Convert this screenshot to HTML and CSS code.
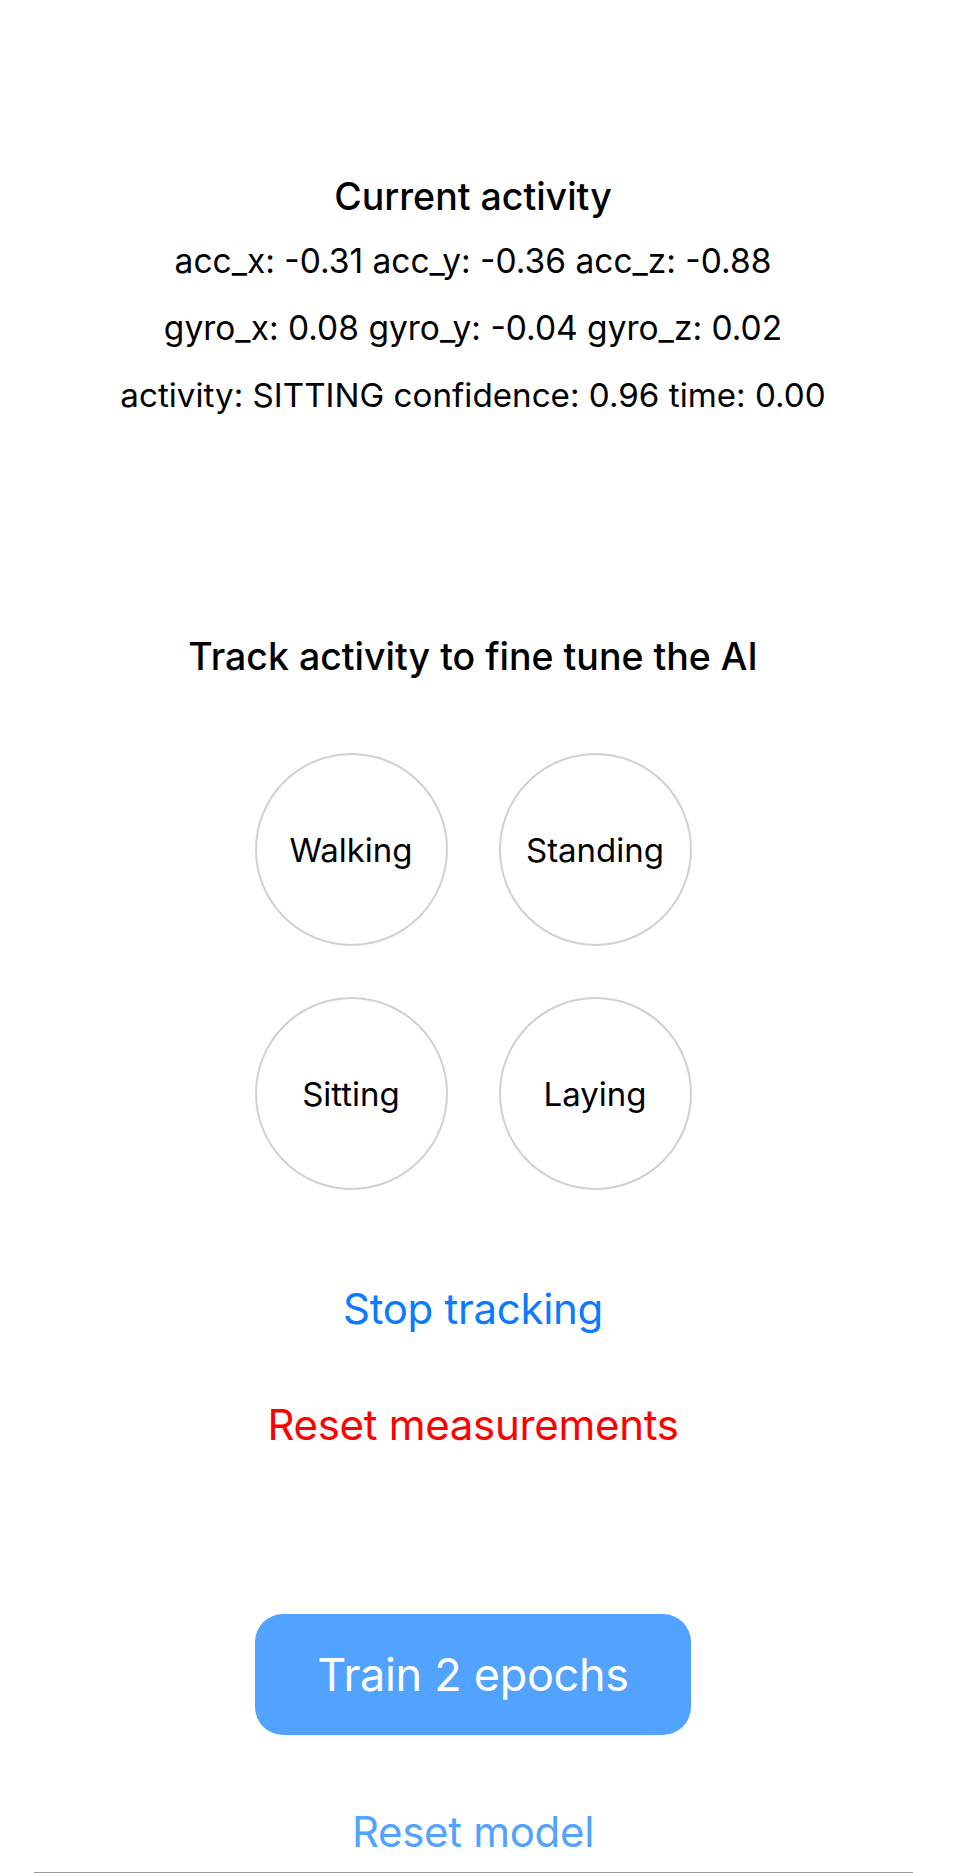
FILE: index.html
```html
<!DOCTYPE html>
<html lang="en">
<head>
<meta charset="utf-8">
<title>Activity tracker</title>
<link rel="stylesheet" href="styles.css">
</head>
<body>
<main class="screen">
  <section class="current">
    <h2 class="title">Current activity</h2>
    <p class="data">acc_x: -0.31 acc_y: -0.36 acc_z: -0.88</p>
    <p class="data">gyro_x: 0.08 gyro_y: -0.04 gyro_z: 0.02</p>
    <p class="data">activity: SITTING confidence: 0.96 time: 0.00</p>
  </section>
  <section class="track">
    <h2 class="title">Track activity to fine tune the AI</h2>
    <div class="grid">
      <button class="circle">Walking</button>
      <button class="circle">Standing</button>
      <button class="circle">Sitting</button>
      <button class="circle">Laying</button>
    </div>
    <button class="link link-blue stop">Stop tracking</button>
    <button class="link link-red reset">Reset measurements</button>
  </section>
  <section class="train">
    <button class="primary">Train 2 epochs</button>
    <button class="link link-light model">Reset model</button>
    <div class="rule"></div>
  </section>
</main>
</body>
</html>
```

FILE: styles.css
```css
* { box-sizing: border-box; }
html, body { margin: 0; padding: 0; background: #ffffff; }
body {
  font-family: Inter, "Noto Sans", "Liberation Sans", sans-serif;
  color: #000000;
  height: 1873px;
  overflow: hidden;
}
.screen {
  width: 946px;
  display: flex;
  flex-direction: column;
  align-items: center;
  padding-top: 177px;
}
.current, .track, .train {
  display: flex;
  flex-direction: column;
  align-items: center;
  width: 100%;
}
.title {
  margin: 0;
  font-size: 37.5px;
  font-weight: 500;
  line-height: 40px;
  white-space: nowrap;
}
.data {
  margin: 0;
  font-size: 33.5px;
  font-weight: 400;
  line-height: 67px;
  white-space: nowrap;
}
.data:last-child { font-size: 33.2px; }
.current .title { margin-bottom: 11px; }
.track { margin-top: 208px; }
.grid {
  margin-top: 76px;
  display: grid;
  grid-template-columns: 193px 193px;
  grid-auto-rows: 193px;
  gap: 51px;
}
.circle {
  width: 193px;
  height: 193px;
  border-radius: 50%;
  border: 2px solid #d1d1d1;
  background: #ffffff;
  font-family: inherit;
  font-size: 33px;
  font-weight: 400;
  color: #000000;
  padding: 0;
  display: flex;
  align-items: center;
  justify-content: center;
}
.link {
  background: none;
  border: none;
  padding: 0;
  font-family: inherit;
  font-size: 42px;
  font-weight: 400;
  line-height: 60px;
  letter-spacing: -0.3px;
  white-space: nowrap;
}
.link-blue { color: #0a7aff; }
.link-red { color: #ff0000; }
.link-light { color: #51a3ff; }
.stop { margin-top: 89px; }
.reset { margin-top: 56px; }
.train { margin-top: 159px; }
.primary {
  width: 436px;
  height: 121px;
  border: none;
  border-radius: 28px;
  background: #51a3ff;
  color: #ffffff;
  font-family: inherit;
  font-size: 45px;
  font-weight: 400;
  letter-spacing: -0.3px;
  padding: 0;
}
.model { margin-top: 67px; }
.rule {
  margin-top: 10px;
  width: 879px;
  height: 1px;
  background: #9a9a9a;
}
```
